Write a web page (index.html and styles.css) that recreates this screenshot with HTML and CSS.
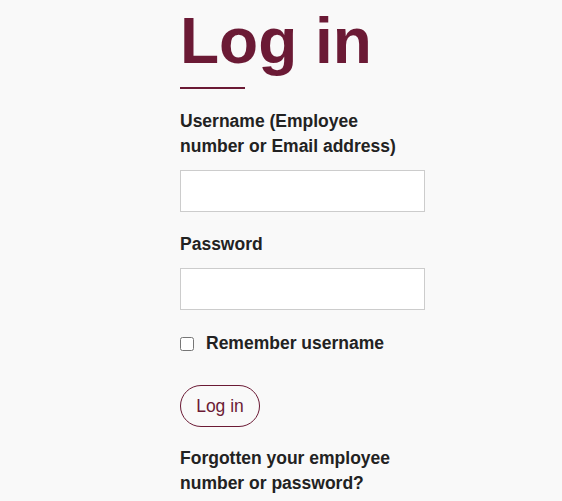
FILE: index.html
```html
<!DOCTYPE html>
<html lang="en">
<head>
<meta charset="utf-8">
<title>Log in</title>
<link rel="stylesheet" href="styles.css">
</head>
<body>
<main class="login">
  <h1 class="title">Log in</h1>
  <form class="form">
    <div class="field">
      <label class="label" for="username">Username (Employee number or Email address)</label>
      <input class="input" id="username" type="text">
    </div>
    <div class="field">
      <label class="label" for="password">Password</label>
      <input class="input" id="password" type="password">
    </div>
    <div class="remember">
      <input class="checkbox" id="remember" type="checkbox">
      <label class="label" for="remember">Remember username</label>
    </div>
    <button class="button" type="button">Log in</button>
    <p class="forgot">Forgotten your employee number or password?</p>
  </form>
</main>
</body>
</html>
```
FILE: styles.css
```css
html, body {
  margin: 0;
  padding: 0;
  background: #f9f9f9;
}
body {
  font-family: "Liberation Sans", Arial, sans-serif;
  color: #222;
}
.login {
  margin-left: 180px;
  width: 245px;
  padding-top: 9px;
}
.title {
  margin: 0;
  font-size: 64px;
  line-height: 64px;
  font-weight: 700;
  color: #6b1a35;
}
.title::after {
  content: "";
  display: block;
  width: 65px;
  height: 2px;
  margin-top: 14px;
  background: #6b1a35;
}
.form {
  display: flex;
  flex-direction: column;
  margin-top: 20px;
}
.field {
  display: flex;
  flex-direction: column;
  gap: 11px;
  margin-bottom: 20px;
}
.label {
  font-size: 17.5px;
  line-height: 25px;
  font-weight: 700;
}
.input {
  box-sizing: border-box;
  width: 245px;
  height: 42px;
  margin: 0;
  border: 1px solid #ccc;
  background: #fff;
}
.remember {
  display: flex;
  align-items: center;
  gap: 12px;
  margin-top: 1px;
}
.checkbox {
  width: 14px;
  height: 14px;
  margin: 1px 0 0 0;
}
.button {
  align-self: flex-start;
  box-sizing: border-box;
  width: 80px;
  height: 42px;
  margin-top: 29px;
  padding: 0;
  border: 1px solid #6b1a35;
  border-radius: 21px;
  background: transparent;
  color: #6b1a35;
  font-family: "Liberation Sans", Arial, sans-serif;
  font-size: 17.5px;
}
.forgot {
  margin: 19px 0 0 0;
  font-size: 17.5px;
  line-height: 25px;
  font-weight: 700;
}
```
